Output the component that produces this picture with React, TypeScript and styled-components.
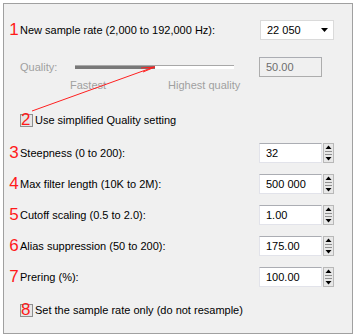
import styled, { createGlobalStyle } from 'styled-components';

const Global = createGlobalStyle`
  html, body { margin: 0; padding: 0; background: #ffffff; }
  body { font-family: "Liberation Sans", Arial, sans-serif; font-size: 11px; color: #000; }
`

const Panel = styled.div`
  position: relative;
  box-sizing: border-box;
  margin: 3px;
  width: 350px;
  height: 331px;
  border: 1px solid #a0a0a0;
  background: #f0f0f0;
  padding: 16px 18px 0 4px;
  display: flex;
  flex-direction: column;
`

const Row = styled.div<{ $gap: number; $h?: number }>`
  display: flex;
  align-items: center;
  height: ${(p) => p.$h ?? 20}px;
  margin-top: ${(p) => p.$gap}px;
`

const Num = styled.span`
  width: 12px;
  flex: none;
  color: #ff1a1a;
  font-size: 17px;
  line-height: 17px;
  text-align: center;
  margin-top: -2px;
`

const Label = styled.span<{ $disabled?: boolean; $w?: number }>`
  flex: ${(p) => (p.$w ? 'none' : '1')};
  width: ${(p) => (p.$w ? `${p.$w}px` : 'auto')};
  white-space: nowrap;
  color: ${(p) => (p.$disabled ? '#a0a0a0' : '#000')};
`

const Combo = styled.div`
  box-sizing: border-box;
  width: 74px;
  height: 20px;
  background: #fff;
  border: 1px solid #dadada;
  display: flex;
  align-items: center;
  justify-content: space-between;
  padding: 0 5px 0 6px;
`

const Edit = styled.div<{ $disabled?: boolean }>`
  box-sizing: border-box;
  width: 63px;
  height: 20px;
  background: ${(p) => (p.$disabled ? '#f0f0f0' : '#fff')};
  border: 1px solid ${(p) => (p.$disabled ? '#adadad' : '#e2e3ea')};
  border-top-color: #abadb3;
  color: ${(p) => (p.$disabled ? '#6d6d6d' : '#000')};
  display: flex;
  align-items: center;
  padding-left: 6px;
`

const QualityEdit = styled(Edit)`
  margin-left: auto;
  margin-right: 12px;
`

const Spin = styled.div`
  display: flex;
  align-items: center;
  gap: 1px;
`

const Track = styled.div`
  box-sizing: border-box;
  width: 159px;
  height: 4px;
  border-top: 1px solid #a8a8a8;
  background: linear-gradient(to right, #787878 0, #787878 80px, #ffffff 80px);
`

const Ticks = styled.div`
  display: flex;
  color: #a0a0a0;
  padding-left: 62px;
  gap: 62px;
`

const Check = styled.div`
  position: relative;
  box-sizing: border-box;
  width: 13px;
  height: 13px;
  margin-left: 12px;
  margin-right: 2px;
  border: 1px solid #8e8f8f;
  background: #e6e6e6;
  flex: none;
`

const CheckNum = styled.span`
  position: absolute;
  left: 0;
  top: -4px;
  color: #ff1a1a;
  font-size: 17px;
  line-height: 17px;
`

const Arrow = styled.svg`
  position: absolute;
  left: 0;
  top: 0;
  pointer-events: none;
`

function SpinButtons() {
  return (
    <svg width="11" height="20" viewBox="0 0 11 20">
      <rect x="0" y="0" width="11" height="20" fill="#e8e8e8" />
      <rect x="0.5" y="0.5" width="10" height="19" fill="none" stroke="#b8b8b8" />
      <path d="M5.5 2.5 L8.5 6 L2.5 6 Z" fill="#000" />
      <line x1="2" y1="8.5" x2="9" y2="8.5" stroke="#909090" />
      <line x1="2" y1="11.5" x2="9" y2="11.5" stroke="#909090" />
      <path d="M2.5 14 L8.5 14 L5.5 17.5 Z" fill="#000" />
    </svg>
  )
}

const spins = [
  { n: '3', label: 'Steepness (0 to 200):', value: '32' },
  { n: '4', label: 'Max filter length (10K to 2M):', value: '500 000' },
  { n: '5', label: 'Cutoff scaling (0.5 to 2.0):', value: '1.00' },
  { n: '6', label: 'Alias suppression (50 to 200):', value: '175.00' },
  { n: '7', label: 'Prering (%):', value: '100.00' },
]

export default function App() {
  return (
    <>
      <Global />
      <Panel>
        <Row $gap={0}>
          <Num>1</Num>
          <Label>New sample rate (2,000 to 192,000 Hz):</Label>
          <Combo>
            <span>22 050</span>
            <svg width="7" height="4" viewBox="0 0 7 4"><path d="M0 0 H7 L3.5 4 Z" fill="#000" /></svg>
          </Combo>
        </Row>
        <Row $gap={17}>
          <Num />
          <Label $disabled $w={55}>Quality:</Label>
          <Track />
          <QualityEdit $disabled>50.00</QualityEdit>
        </Row>
        <Row $gap={1} $h={14}>
          <Ticks>
            <span>Fastest</span>
            <span>Highest quality</span>
          </Ticks>
        </Row>
        <Row $gap={18}>
          <Check><CheckNum>2</CheckNum></Check>
          <Label>Use simplified Quality setting</Label>
        </Row>
        {spins.map((s, i) => (
          <Row key={s.n} $gap={i === 0 ? 13 : 11}>
            <Num>{s.n}</Num>
            <Label>{s.label}</Label>
            <Spin>
              <Edit>{s.value}</Edit>
              <SpinButtons />
            </Spin>
          </Row>
        ))}
        <Row $gap={13}>
          <Check><CheckNum>8</CheckNum></Check>
          <Label>Set the sample rate only (do not resample)</Label>
        </Row>
        <Arrow width="350" height="331">
          <line x1="28" y1="107" x2="150" y2="63" stroke="#ff2020" strokeWidth="1" />
          <path d="M151 63 L137 64 M151 63 L139 68" stroke="#ff2020" strokeWidth="1" fill="none" />
        </Arrow>
      </Panel>
    </>
  )
}
